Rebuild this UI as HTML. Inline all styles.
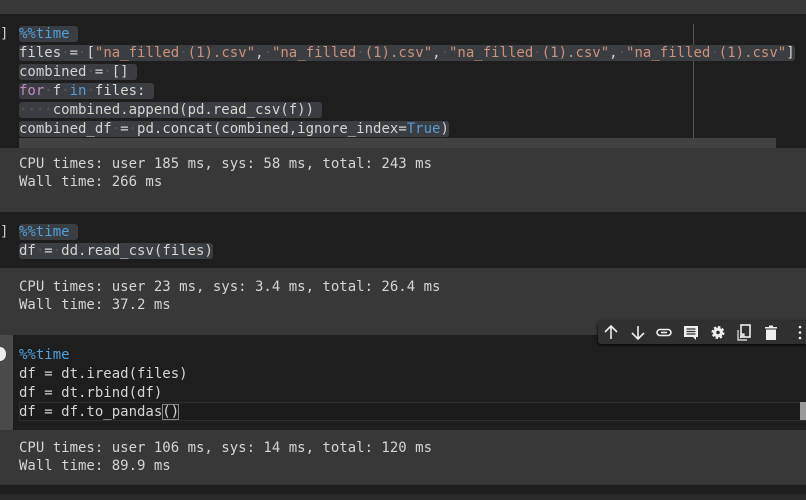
<!DOCTYPE html>
<html><head><meta charset="utf-8"><style>
*{margin:0;padding:0;box-sizing:border-box}
body{width:806px;height:500px;background:#1e1e1e;position:relative;overflow:hidden;font-family:"DejaVu Sans Mono","Liberation Mono",monospace;font-size:14px;color:#d4d4d4}
.abs{position:absolute}
.line{position:absolute;left:19px;height:19px;line-height:19px;white-space:pre}
.sel{background:#3a3d41;border-radius:3px}
.out{position:absolute;left:0;width:806px;background:#383838}
.o{position:absolute;left:19px;line-height:18px;white-space:pre;color:#d4d4d4}
.k{color:#c586c0}.b{color:#569cd6}.s{color:#ce9178}.m{color:#4fa0dc}
.dot{color:#555}
</style></head><body>
<div class="abs" style="left:0;top:0;width:806px;height:14px;background:#383838"></div>
<!-- cell 1 -->
<div class="abs" style="left:0;top:25px;font-size:14px;color:#ccc;line-height:19px">]</div>
<div class="abs" style="left:693px;top:24px;width:1px;height:124px;background:#555"></div>
<div class="abs" style="left:19px;top:138px;width:757px;height:10px;background:#424242"></div>
<div class="line" style="top:25px"><span class="sel m">%%time </span></div>
<div class="line" style="top:44px"><span class="sel">files<span class="dot">·</span>=<span class="dot">·</span>[<span class="s">"na_filled<span class="dot">·</span>(1).csv"</span>,<span class="dot">·</span><span class="s">"na_filled<span class="dot">·</span>(1).csv"</span>,<span class="dot">·</span><span class="s">"na_filled<span class="dot">·</span>(1).csv"</span>,<span class="dot">·</span><span class="s">"na_filled<span class="dot">·</span>(1).csv"</span>]</span></div>
<div class="line" style="top:63px"><span class="sel">combined<span class="dot">·</span>=<span class="dot">·</span>[] </span></div>
<div class="line" style="top:82px"><span class="sel"><span class="k">for</span><span class="dot">·</span>f<span class="dot">·</span><span class="b">in</span><span class="dot">·</span>files: </span></div>
<div class="line" style="top:101px"><span class="sel"><span class="dot">····</span>combined.append(pd.read_csv(f)) </span></div>
<div class="line" style="top:120px"><span class="sel">combined_df<span class="dot">·</span>=<span class="dot">·</span>pd.concat(combined,ignore_index=<span class="b">True</span>)</span></div>
<div class="out" style="top:148px;height:64px"><div class="o" style="top:7px">CPU times: user 185 ms, sys: 58 ms, total: 243 ms
Wall time: 266 ms</div></div>
<!-- cell 2 -->
<div class="abs" style="left:0;top:223px;color:#ccc;line-height:19px">]</div>
<div class="line" style="top:223px"><span class="sel m">%%time </span></div>
<div class="line" style="top:242px"><span class="sel">df<span class="dot">·</span>=<span class="dot">·</span>dd.read_csv(files)</span></div>
<div class="out" style="top:268px;height:67px"><div class="o" style="top:10px">CPU times: user 23 ms, sys: 3.4 ms, total: 26.4 ms
Wall time: 37.2 ms</div></div>
<!-- cell 3 -->
<div class="abs" style="left:0;top:335px;width:13px;height:95px;background:#4a4a4a"></div>
<div class="abs" style="left:-6px;top:347px;width:12px;height:14px;border-radius:50%;background:#eee"></div>
<div class="abs" style="left:19px;top:402px;width:787px;height:19px;border:1px solid #2e2e2e;background:#1c1c1c"></div>
<div class="abs" style="left:800px;top:402px;width:6px;height:18px;background:#9a9a9a"></div>
<div class="line m" style="top:346px">%%time</div>
<div class="line" style="top:365px">df = dt.iread(files)</div>
<div class="line" style="top:384px">df = dt.rbind(df)</div>
<div class="line" style="top:403px">df = df.to_pandas<span style="outline:1px solid #888;outline-offset:-1px">()</span></div>
<div class="out" style="top:430px;height:54px"><div class="o" style="top:9px">CPU times: user 106 ms, sys: 14 ms, total: 120 ms
Wall time: 89.9 ms</div></div>
<div class="abs" style="left:0;top:484px;width:806px;height:16px;background:#1e1e1e;border-top:1px solid #333"></div>
<div class="abs" style="left:0;top:494px;width:806px;height:6px;background:#2a2a2a"></div>
<!-- toolbar -->
<div class="abs" style="left:598px;top:321px;width:210px;height:23px;background:#303030;border-radius:3px;box-shadow:0 1px 3px #000"></div>
<svg class="abs" style="left:598px;top:321px" width="208" height="23" viewBox="0 0 208 23" fill="none" stroke="#eee" stroke-width="1.6">
<path d="M13 18V5M7 11l6-6 6 6"/>
<path d="M40 5v13M34 12l6 6 6-6"/>
<rect x="59" y="8.5" width="14" height="6" rx="3"/><path d="M63 11.5h6"/>
<path d="M86 5h14v11h-2v3l-3-3h-9z" fill="#eee" stroke="none"/><path d="M88.5 8h9M88.5 10.5h9M88.5 13h9" stroke="#303030" stroke-width="1.2"/>
<circle cx="120" cy="11.5" r="5" fill="#eee" stroke="#eee" stroke-width="3" stroke-dasharray="2.2 1.7"/><circle cx="120" cy="11.5" r="1.8" fill="#303030" stroke="none"/>
<rect x="143" y="4" width="9" height="12"/><path d="M140 9v10h9M142 17l4-4M143 13h3v3" stroke-width="1.2"/>
<path d="M167 6h12v1.5h-12zM171 4.5h4v1.5h-4zM168 8.5h10v10.5h-10z" fill="#eee" stroke="none"/>
<circle cx="202" cy="6" r="1.3" fill="#eee" stroke="none"/><circle cx="202" cy="11.5" r="1.3" fill="#eee" stroke="none"/><circle cx="202" cy="17" r="1.3" fill="#eee" stroke="none"/>
</svg>
</body></html>
